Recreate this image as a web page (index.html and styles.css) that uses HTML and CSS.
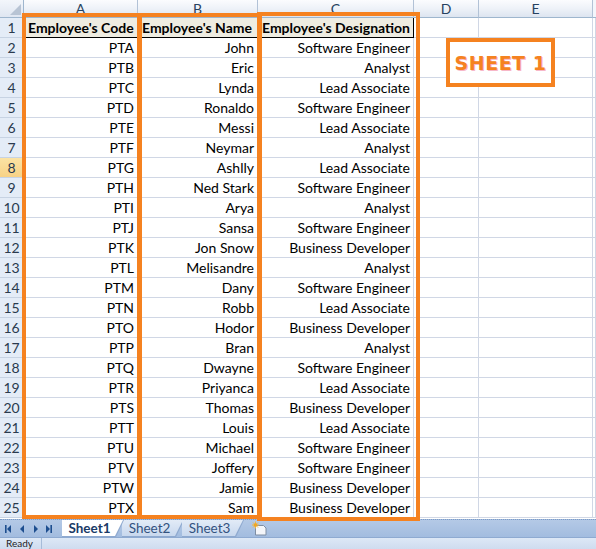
FILE: index.html
```html
<!DOCTYPE html>
<html>
<head>
<meta charset="utf-8">
<link rel="stylesheet" href="styles.css">
</head>
<body>
<div class="app">
  <div class="sheet">
    <div class="corner"><span class="tri"></span></div>
    <div class="ch">A</div><div class="ch">B</div><div class="ch">C</div><div class="ch">D</div><div class="ch">E</div><div class="ch end"></div>

    <div class="rh">1</div><div class="c hd">Employee's Code</div><div class="c hd">Employee's Name</div><div class="c hd">Employee's Designation</div><div class="c"></div><div class="c"></div><div class="c end"></div>
    <div class="rh">2</div><div class="c r">PTA</div><div class="c r">John</div><div class="c r">Software Engineer</div><div class="c"></div><div class="c"></div><div class="c end"></div>
    <div class="rh">3</div><div class="c r">PTB</div><div class="c r">Eric</div><div class="c r">Analyst</div><div class="c"></div><div class="c"></div><div class="c end"></div>
    <div class="rh">4</div><div class="c r">PTC</div><div class="c r">Lynda</div><div class="c r">Lead Associate</div><div class="c"></div><div class="c"></div><div class="c end"></div>
    <div class="rh">5</div><div class="c r">PTD</div><div class="c r">Ronaldo</div><div class="c r">Software Engineer</div><div class="c"></div><div class="c"></div><div class="c end"></div>
    <div class="rh">6</div><div class="c r">PTE</div><div class="c r">Messi</div><div class="c r">Lead Associate</div><div class="c"></div><div class="c"></div><div class="c end"></div>
    <div class="rh">7</div><div class="c r">PTF</div><div class="c r">Neymar</div><div class="c r">Analyst</div><div class="c"></div><div class="c"></div><div class="c end"></div>
    <div class="rh sel">8</div><div class="c r">PTG</div><div class="c r">Ashlly</div><div class="c r">Lead Associate</div><div class="c"></div><div class="c"></div><div class="c end"></div>
    <div class="rh">9</div><div class="c r">PTH</div><div class="c r">Ned Stark</div><div class="c r">Software Engineer</div><div class="c"></div><div class="c"></div><div class="c end"></div>
    <div class="rh">10</div><div class="c r">PTI</div><div class="c r">Arya</div><div class="c r">Analyst</div><div class="c"></div><div class="c"></div><div class="c end"></div>
    <div class="rh">11</div><div class="c r">PTJ</div><div class="c r">Sansa</div><div class="c r">Software Engineer</div><div class="c"></div><div class="c"></div><div class="c end"></div>
    <div class="rh">12</div><div class="c r">PTK</div><div class="c r">Jon Snow</div><div class="c r">Business Developer</div><div class="c"></div><div class="c"></div><div class="c end"></div>
    <div class="rh">13</div><div class="c r">PTL</div><div class="c r">Melisandre</div><div class="c r">Analyst</div><div class="c"></div><div class="c"></div><div class="c end"></div>
    <div class="rh">14</div><div class="c r">PTM</div><div class="c r">Dany</div><div class="c r">Software Engineer</div><div class="c"></div><div class="c"></div><div class="c end"></div>
    <div class="rh">15</div><div class="c r">PTN</div><div class="c r">Robb</div><div class="c r">Lead Associate</div><div class="c"></div><div class="c"></div><div class="c end"></div>
    <div class="rh">16</div><div class="c r">PTO</div><div class="c r">Hodor</div><div class="c r">Business Developer</div><div class="c"></div><div class="c"></div><div class="c end"></div>
    <div class="rh">17</div><div class="c r">PTP</div><div class="c r">Bran</div><div class="c r">Analyst</div><div class="c"></div><div class="c"></div><div class="c end"></div>
    <div class="rh">18</div><div class="c r">PTQ</div><div class="c r">Dwayne</div><div class="c r">Software Engineer</div><div class="c"></div><div class="c"></div><div class="c end"></div>
    <div class="rh">19</div><div class="c r">PTR</div><div class="c r">Priyanca</div><div class="c r">Lead Associate</div><div class="c"></div><div class="c"></div><div class="c end"></div>
    <div class="rh">20</div><div class="c r">PTS</div><div class="c r">Thomas</div><div class="c r">Business Developer</div><div class="c"></div><div class="c"></div><div class="c end"></div>
    <div class="rh">21</div><div class="c r">PTT</div><div class="c r">Louis</div><div class="c r">Lead Associate</div><div class="c"></div><div class="c"></div><div class="c end"></div>
    <div class="rh">22</div><div class="c r">PTU</div><div class="c r">Michael</div><div class="c r">Software Engineer</div><div class="c"></div><div class="c"></div><div class="c end"></div>
    <div class="rh">23</div><div class="c r">PTV</div><div class="c r">Joffery</div><div class="c r">Software Engineer</div><div class="c"></div><div class="c"></div><div class="c end"></div>
    <div class="rh">24</div><div class="c r">PTW</div><div class="c r">Jamie</div><div class="c r">Business Developer</div><div class="c"></div><div class="c"></div><div class="c end"></div>
    <div class="rh">25</div><div class="c r">PTX</div><div class="c r">Sam</div><div class="c r">Business Developer</div><div class="c"></div><div class="c"></div><div class="c end"></div>

    <div class="box box-a"></div>
    <div class="box box-b"></div>
    <div class="box box-c"></div>
    <div class="callout"><span>SHEET 1</span></div>
  </div>

  <div class="tabbar">
    <div class="nav">
      <svg width="56" height="16" viewBox="0 0 56 16">
        <g fill="#1d4e8f">
          <rect x="5" y="4" width="1.6" height="8"/>
          <polygon points="7,8 11,4 11,12"/>
          <polygon points="20,8 24,4 24,12"/>
          <polygon points="38,8 34,4 34,12"/>
          <polygon points="50,8 46,4 46,12"/>
          <rect x="50.4" y="4" width="1.6" height="8"/>
        </g>
      </svg>
    </div>
    <div class="tabs">
      <div class="tab active"><span>Sheet1</span></div>
      <div class="tab"><span>Sheet2</span></div>
      <div class="tab"><span>Sheet3</span></div>
      <div class="tab ins">
        <svg width="18" height="15" viewBox="0 0 18 15">
          <path d="M4.5 4.5 h8 l2.5 2.5 v7 h-10.5 z" fill="#f4f6fa" stroke="#7f8ea3" stroke-width="1"/>
          <path d="M4.5 0.5 v7 M1 4 h7 M2 1.5 l5 5 M7 1.5 l-5 5" stroke="#f3b63c" stroke-width="1"/>
          <circle cx="4.5" cy="4" r="1.8" fill="#f0a623"/>
        </svg>
      </div>
    </div>
  </div>
  <div class="status">
    <span class="ready">Ready</span>
  </div>
</div>
</body>
</html>
```

FILE: styles.css
```css
* { box-sizing: border-box; }
html, body { margin: 0; padding: 0; }
body {
  width: 596px;
  height: 549px;
  overflow: hidden;
  background: #ffffff;
  font-family: Lato, "Open Sans", sans-serif;
}
.app {
  width: 596px;
  height: 549px;
  display: flex;
  flex-direction: column;
}
.sheet {
  position: relative;
  display: grid;
  grid-template-columns: 24px 114px 120px 156px 65px 114px 3px;
  grid-template-rows: 18px;
  grid-auto-rows: 20px;
  background: #ffffff;
}
.corner {
  position: relative;
  background: linear-gradient(#f3f6fb, #dfe6f1);
  border-right: 1px solid #9eb6ce;
  border-bottom: 1px solid #9eb6ce;
}
.tri {
  position: absolute;
  right: 2px;
  bottom: 2px;
  width: 0;
  height: 0;
  border-left: 11px solid transparent;
  border-bottom: 11px solid #b8c4d4;
}
.ch {
  background: linear-gradient(#fbfcfe 0%, #eef2f8 50%, #dde5f0 100%);
  border-right: 1px solid #b2c2d6;
  border-bottom: 1px solid #9eb6ce;
  color: #27415f;
  font-size: 14px;
  line-height: 17px;
  text-align: center;
}
.ch.end { background: #f3f6fb; border-right: none; }
.rh {
  background: #e4ecf7;
  border-right: 1px solid #9eb6ce;
  border-bottom: 1px solid #c7d3e3;
  color: #2a3a4e;
  font-size: 14px;
  line-height: 19px;
  text-align: center;
}
.rh.sel {
  background: linear-gradient(#fbe3a4, #f8d285);
  color: #2a3a4e;
}
.c {
  border-right: 1px solid #d0d7e5;
  border-bottom: 1px solid #d0d7e5;
  font-size: 14px;
  line-height: 19px;
  padding: 0 3px;
  color: #000000;
  white-space: nowrap;
  overflow: hidden;
}
.c.end { border-right: 1px solid #d0d7e5; padding: 0; }
.c.r { text-align: right; }
.c.hd {
  background: #eeece1;
  font-weight: 700;
  border-right: 1px solid #000000;
  border-bottom: 1px solid #000000;
  text-align: left;
  padding-left: 4px;
  padding-right: 0;
}

.box {
  position: absolute;
  border: 4px solid #f58220;
  pointer-events: none;
}
.box-a { left: 22px; top: 13px; width: 120px; height: 506px; }
.box-b { left: 137px; top: 13px; width: 125px; height: 506px; }
.box-c { left: 257px; top: 12px; width: 163px; height: 509px; }

.callout {
  position: absolute;
  left: 446px;
  top: 38px;
  width: 109px;
  height: 49px;
  border: 4px solid #f58220;
  background: #ffffff;
  display: flex;
  align-items: center;
  justify-content: center;
}
.callout span {
  font-family: "DejaVu Sans", sans-serif;
  font-weight: 900;
  font-size: 19px;
  letter-spacing: 0.5px;
  color: #f58220;
  text-shadow: 1px 1px 0 #f7b7c8;
}

.tabbar {
  height: 18px;
  margin-top: 1px;
  display: flex;
  align-items: stretch;
  background: linear-gradient(#b4c9e6, #a2bcdf);
  border-top: 1px dotted #7e9cc6;
}
.nav {
  width: 58px;
  display: flex;
  align-items: center;
}
.tabs {
  display: flex;
  align-items: stretch;
  padding-left: 4px;
}
.tab {
  position: relative;
  width: 62px;
  margin-right: -2px;
  background: #8ea9cf;
  clip-path: polygon(0 0, 100% 0, calc(100% - 8px) 100%, 0 100%);
}
.tab span {
  position: absolute;
  inset: 0 1px 1px 0;
  display: flex;
  align-items: center;
  justify-content: center;
  padding-right: 6px;
  background: linear-gradient(#e2ebf7, #c8d8ee);
  clip-path: polygon(0 0, 100% 0, calc(100% - 8px) 100%, 0 100%);
  font-family: Lato, "Open Sans", sans-serif;
  font-size: 13.5px;
  color: #33527f;
}
.tab.active { z-index: 2; }
.tab.active span {
  background: #ffffff;
  font-weight: 700;
  color: #1a3a66;
}
.tab.ins {
  width: 30px;
  background: transparent;
  clip-path: none;
  display: flex;
  align-items: center;
  justify-content: center;
  padding-left: 6px;
}
.status {
  flex: 1;
  background: linear-gradient(#dde8f6, #cfdcef);
  border-top: 1px solid #8eaad1;
  display: flex;
  align-items: flex-start;
}
.ready {
  padding: 0 8px 0 6px;
  font-family: Lato, "Open Sans", sans-serif;
  font-size: 10px;
  line-height: 11px;
  color: #1e1e1e;
  border-right: 1px solid #a6bcd9;
  height: 100%;
}
```
